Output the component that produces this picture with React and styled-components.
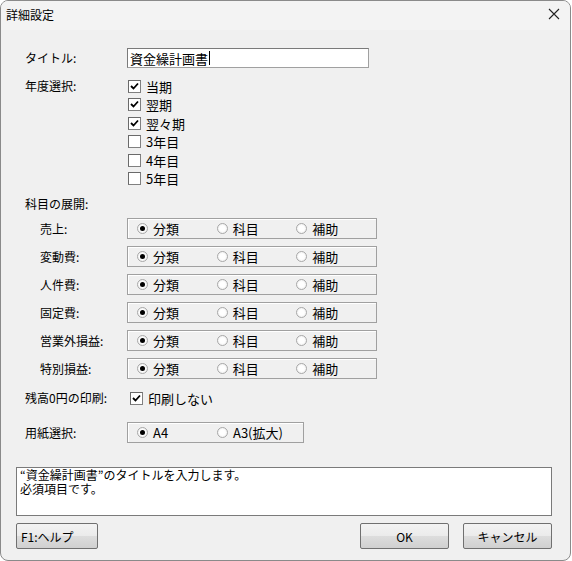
import React from 'react'
import styled, { createGlobalStyle } from 'styled-components'

const GlobalStyle = createGlobalStyle`
  html, body {
    margin: 0;
    padding: 0;
    background: #ffffff;
  }
  body {
    font-family: "Noto Sans CJK JP", "Noto Sans", sans-serif;
    font-size: 12px;
    color: #000;
  }
`

const years = [
  { label: '当期', checked: true },
  { label: '翌期', checked: true },
  { label: '翌々期', checked: true },
  { label: '3年目', checked: false },
  { label: '4年目', checked: false },
  { label: '5年目', checked: false },
]

const subjects = ['売上:', '変動費:', '人件費:', '固定費:', '営業外損益:', '特別損益:']
const levels = ['分類', '科目', '補助']

const Check = ({ checked }) => (
  <CheckBox>
    {checked && (
      <svg width='9' height='9' viewBox='0 0 9 9'>
        <path d='M1 4 L3.5 6.5 L8 1.5' fill='none' stroke='#000' strokeWidth='1.8' />
      </svg>
    )}
  </CheckBox>
)

const Radio = ({ checked, label }) => (
  <RadioItem>
    <RadioDot checked={checked} />
    <span>{label}</span>
  </RadioItem>
)

export default () => {
  return (
    <Window>
      <GlobalStyle />
      <TitleBar>
        <TitleText>詳細設定</TitleText>
        <Close>
          <svg width='12' height='12' viewBox='0 0 12 12'>
            <path d='M1 1 L11 11 M11 1 L1 11' stroke='#222' strokeWidth='1.1' />
          </svg>
        </Close>
      </TitleBar>

      <Body>
        <Form>
          <Row>
            <Label>タイトル:</Label>
            <TextBox>資金繰計画書<Caret /></TextBox>
          </Row>

          <Row top={9} align='flex-start'>
            <Label>年度選択:</Label>
            <CheckList>
              {years.map((y, i) =>
                <CheckItem key={i}>
                  <Check checked={y.checked} />
                  <span>{y.label}</span>
                </CheckItem>
              )}
            </CheckList>
          </Row>

          <Section>科目の展開:</Section>

          {subjects.map((s, i) =>
            <Row key={i} top={i === 0 ? 6 : 7}>
              <Label indent>{s}</Label>
              <Group width={250}>
                {levels.map((l, j) => <Radio key={j} label={l} checked={j === 0} />)}
              </Group>
            </Row>
          )}

          <Row top={10}>
            <Label>残高0円の印刷:</Label>
            <CheckItem inline>
              <Check checked />
              <span>印刷しない</span>
            </CheckItem>
          </Row>

          <Row top={15}>
            <Label>用紙選択:</Label>
            <Group width={177}>
              <Radio label='A4' checked />
              <Radio label='A3(拡大)' />
            </Group>
          </Row>
        </Form>

        <Message>
          <MessageLine>“資金繰計画書”のタイトルを入力します。</MessageLine>
          <MessageLine>必須項目です。</MessageLine>
        </Message>

        <Buttons>
          <Button width={82}>F1:ヘルプ</Button>
          <Spacer />
          <Button width={89} center>OK</Button>
          <Button width={89} center>キャンセル</Button>
        </Buttons>
      </Body>
    </Window>
  )
}

const Window = styled.div`
  width: 571px;
  height: 561px;
  box-sizing: border-box;
  border: 1px solid #8a8a8a;
  border-radius: 8px;
  background: #f0f0f0;
  overflow: hidden;
  display: flex;
  flex-direction: column;
`

const TitleBar = styled.div`
  height: 29px;
  display: flex;
  align-items: center;
  justify-content: space-between;
  background: #f3f3f3;
  padding: 0 10px 0 5px;
`

const TitleText = styled.div`
  font-size: 12px;
  line-height: 14px;
  margin-top: -2px;
`

const Close = styled.div`
  width: 12px;
  height: 12px;
  display: flex;
  margin-top: -3px;
`

const Body = styled.div`
  padding: 18px 18px 0 15px;
  display: flex;
  flex-direction: column;
`

const Form = styled.div`
  padding-left: 9px;
  display: flex;
  flex-direction: column;
`

const Row = styled.div`
  display: flex;
  align-items: ${p => p.align || 'center'};
  margin-top: ${p => p.top || 0}px;
`

const Label = styled.div`
  width: ${p => p.indent ? 87 : 102}px;
  padding-left: ${p => p.indent ? 15 : 0}px;
  line-height: 18px;
  white-space: nowrap;
`

const Section = styled.div`
  margin-top: 8px;
  line-height: 16px;
`

const TextBox = styled.div`
  width: 242px;
  height: 20px;
  box-sizing: border-box;
  background: #fff;
  border: 1px solid #a0a0a0;
  border-top-color: #7a7a7a;
  border-left-color: #7a7a7a;
  display: flex;
  align-items: center;
  padding-left: 2px;
  font-size: 13px;
`

const Caret = styled.span`
  display: inline-block;
  width: 1px;
  height: 14px;
  background: #000;
  margin-left: 1px;
`

const CheckList = styled.div`
  display: flex;
  flex-direction: column;
`

const CheckItem = styled.div`
  display: flex;
  align-items: center;
  gap: 5px;
  height: ${p => p.inline ? 18 : 18.5}px;
  padding-left: ${p => p.inline ? 3 : 1}px;
  font-size: 13px;
`

const CheckBox = styled.div`
  width: 13px;
  height: 13px;
  box-sizing: border-box;
  background: #fff;
  border: 1px solid #808080;
  border-top-color: #6a6a6a;
  border-left-color: #6a6a6a;
  display: flex;
  align-items: center;
  justify-content: center;
`

const Group = styled.div`
  width: ${p => p.width}px;
  height: 21px;
  box-sizing: border-box;
  border: 1px solid #a0a0a0;
  box-shadow: inset 1px 1px 0 #ffffff;
  display: flex;
  align-items: center;
  padding-left: 9px;
`

const RadioItem = styled.div`
  width: 80px;
  display: flex;
  align-items: center;
  gap: 5px;
  font-size: 13px;
`

const RadioDot = styled.div`
  width: 11px;
  height: 11px;
  box-sizing: border-box;
  border-radius: 50%;
  border: 1px solid #a8a8a8;
  background: radial-gradient(circle, #ffffff 40%, #e6e6e6 100%);
  display: flex;
  align-items: center;
  justify-content: center;

  &::after {
    content: '';
    width: 5px;
    height: 5px;
    border-radius: 50%;
    background: ${p => p.checked ? '#000' : 'transparent'};
  }
`

const Message = styled.div`
  margin-top: 24px;
  height: 49px;
  box-sizing: border-box;
  background: #fff;
  border: 1px solid #7a7a7a;
  padding: 0 3px;
  display: flex;
  flex-direction: column;
`

const MessageLine = styled.div`
  height: 14px;
  line-height: 14px;
  font-size: 12px;
  white-space: nowrap;
`

const Buttons = styled.div`
  display: flex;
  margin-top: 7px;
  gap: 14px;
`

const Spacer = styled.div`
  flex: 1;
`

const Button = styled.div`
  width: ${p => p.width}px;
  height: 26px;
  box-sizing: border-box;
  border: 1px solid #707070;
  border-radius: 2px;
  background: linear-gradient(#f3f3f3, #ebebeb 50%, #dddddd 51%, #d0d0d0);
  display: flex;
  align-items: center;
  justify-content: ${p => p.center ? 'center' : 'flex-start'};
  padding-left: ${p => p.center ? 0 : 4}px;
  font-size: 12px;
`
